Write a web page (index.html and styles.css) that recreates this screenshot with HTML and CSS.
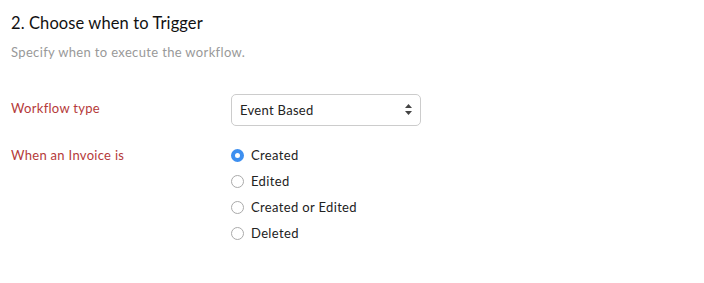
FILE: index.html
```html
<!DOCTYPE html>
<html lang="en">
<head>
    <meta charset="UTF-8">
    <title>Choose when to Trigger</title>
    <link rel="stylesheet" href="styles.css">
</head>
<body>
    <div class="section">
        <h3 class="section-title">2. Choose when to Trigger</h3>
        <p class="section-desc">Specify when to execute the workflow.</p>

        <div class="form-row">
            <label class="form-label" for="workflow-type">Workflow type</label>
            <div class="select-wrap">
                <select id="workflow-type" class="form-select">
                    <option>Event Based</option>
                    <option>Date Based</option>
                </select>
                <svg class="select-arrows" width="7" height="11" viewBox="0 0 7 11">
                    <path d="M3.5 0 L7 4 L0 4 Z" fill="#444"/>
                    <path d="M3.5 11 L7 7 L0 7 Z" fill="#444"/>
                </svg>
            </div>
        </div>

        <div class="form-row">
            <span class="form-label">When an Invoice is</span>
            <div class="radio-list">
                <label class="radio"><input type="radio" name="event" checked><span class="radio-dot"></span>Created</label>
                <label class="radio"><input type="radio" name="event"><span class="radio-dot"></span>Edited</label>
                <label class="radio"><input type="radio" name="event"><span class="radio-dot"></span>Created or Edited</label>
                <label class="radio"><input type="radio" name="event"><span class="radio-dot"></span>Deleted</label>
            </div>
        </div>
    </div>
</body>
</html>
```

FILE: styles.css
```css
body {
    margin: 0;
    background: #fff;
    font-family: Lato, "Open Sans", Arial, sans-serif;
    color: #222;
}
.section {
    padding: 11px 11px;
}
.section-title {
    margin: 0;
    font-size: 16.5px;
    font-weight: normal;
    line-height: 24px;
    letter-spacing: 0.1px;
    color: #111;
}
.section-desc {
    margin: 8px 0 0;
    font-size: 13px;
    line-height: 18px;
    letter-spacing: 0.35px;
    color: #999;
}
.form-row {
    display: flex;
    align-items: flex-start;
    margin-top: 37px;
}
.form-row + .form-row {
    margin-top: 23px;
}
.form-label {
    width: 220px;
    font-size: 13px;
    line-height: 20px;
    letter-spacing: 0.3px;
    color: #b53a3a;
}
.select-wrap {
    position: relative;
    margin-top: -4px;
    height: 28px;
}
.form-select {
    appearance: none;
    box-sizing: border-box;
    width: 190px;
    height: 32px;
    padding: 0 24px 0 8px;
    border: 1px solid #ccc;
    border-radius: 5px;
    background: #fff;
    font-family: inherit;
    font-size: 13px;
    letter-spacing: 0.3px;
    color: #222;
}
.select-arrows {
    position: absolute;
    right: 9px;
    top: 10px;
    pointer-events: none;
}
.radio-list {
    display: flex;
    flex-direction: column;
    gap: 6px;
}
.radio {
    display: flex;
    align-items: center;
    font-size: 13px;
    line-height: 20px;
    letter-spacing: 0.35px;
    color: #222;
}
.radio input {
    display: none;
}
.radio-dot {
    box-sizing: border-box;
    width: 13px;
    height: 13px;
    margin-right: 7px;
    border: 1px solid #aaa;
    border-radius: 50%;
    background: #fff;
}
.radio input:checked + .radio-dot {
    border: 4px solid #3d8ff0;
    background: #fff;
}
```
